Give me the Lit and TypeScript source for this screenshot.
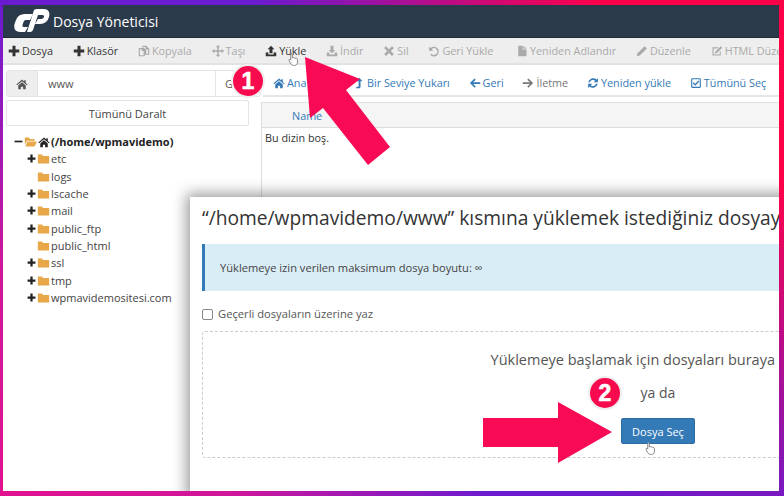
import { LitElement, html, css, svg } from "lit";
import { customElement } from "lit/decorators.js";

const paths: Record<string, any> = {
  plus: svg`<path d="M6 1h4v5h5v4h-5v5H6v-5H1V6h5z"/>`,
  copy: svg`<path fill-rule="evenodd" d="M6 1h5l4 4v8H9v2H1V4h5zM7 2.500V4h1l3 3v4.500h2.500V6H10V2.500zM2.500 5.500v8h5V8H5V5.500z"/>`,
  move: svg`<path d="M8 0l3 3H9v4h4V5l3 3-3 3V9H9v4h2l-3 3-3-3h2V9H3v2L0 8l3-3v2h4V3H5z"/>`,
  upload: svg`<path d="M8 1l4.500 4.500H10V11H6V5.500H3.500zM1 10h3.500v2.500h7V10H15v5H1z"/>`,
  download: svg`<path d="M6 1h4v5.500h2.500L8 11 3.500 6.500H6zM1 10h3.500v2.500h7V10H15v5H1z"/>`,
  times: svg`<path d="M4 1.500l4 4 4-4 2.500 2.500-4 4 4 4-2.500 2.500-4-4-4 4L1.500 12l4-4-4-4z"/>`,
  undo: svg`<path d="M1.500 2l2 2A6.500 6.500 0 1 1 3 13l1.500-1.500A4.400 4.400 0 1 0 5 5.500L7 7.500H1.500z"/>`,
  file: svg`<path d="M3 1h6v5h5v9H3zM10 1l4 4h-4z"/>`,
  pencil: svg`<path d="M11.500 1.500l3 3-9.500 9.500-4 1 1-4z"/>`,
  edit: svg`<path fill-rule="evenodd" d="M2 3h8L8.500 4.500h-5v8h8v-3L13 8v6H2z"/><path d="M13 1.500l2 2-7 7-3 1 1-3z"/>`,
  home: svg`<path d="M8 2l3 2.700V3h2v3.500l2.500 2.300-1 1L8 4.200 1.500 9.800l-1-1zM3 10l5-4.300L13 10v5H9.500v-3.500h-3V15H3z"/>`,
  up: svg`<path d="M8.500 1l4 4.500H10V13c0 1.500-1 2-2 2H3.500l1.500-2h2.500V5.500H5z"/>`,
  left: svg`<path d="M7.500 2l1.500 1.500L5.500 7H15v2.200H5.500L9 12.700 7.500 14.200 1.200 8z"/>`,
  right: svg`<path d="M8.500 2L7 3.500 10.500 7H1v2.200h9.500L7 12.700l1.500 1.500L14.800 8z"/>`,
  refresh: svg`<path d="M14.500 1.500V7h-5.500l2-2A4.300 4.300 0 0 0 4 7H1.700A6.600 6.600 0 0 1 12.600 3.400zM1.500 14.500V9h5.500l-2 2A4.300 4.300 0 0 0 12 9h2.300A6.600 6.600 0 0 1 3.400 12.600z"/>`,
  check: svg`<path fill-rule="evenodd" d="M3 1.500h10A1.500 1.500 0 0 1 14.500 3v10a1.500 1.500 0 0 1-1.500 1.500H3A1.500 1.500 0 0 1 1.500 13V3A1.500 1.500 0 0 1 3 1.500zM3 3v10h10V3z"/><path d="M11.300 4.800l1.200 1.200-5.500 5.500L3.700 8.200l1.200-1.200L7 9.100z"/>`,
  folder: svg`<path d="M1 3h5l1.500 2H15v9H1z"/>`,
  open: svg`<path d="M1 3h5l1.500 2H13v2H4L1 12z"/><path d="M4.500 8H16l-3 6H1.500z"/>`,
  minus: svg`<path d="M1 6.500h14v3H1z"/>`,
};

const icon = (name: string) => html`<svg class="ic" viewBox="0 0 16 16" fill="currentColor">${paths[name]}</svg>`;

const hand = html`<svg class="hand-svg" viewBox="0 0 14 18"><path d="M4 1.500c1 0 1.500.700 1.500 1.500v4c.8-.6 1.800-.4 2.200.2.800-.5 1.700-.2 2 .5.900-.4 2.300.100 2.300 1.300v3.500c0 2.500-1.500 4-3.800 4H7c-1.600 0-2.500-.8-3.300-2L1.300 10.500c-.6-1 .6-2.200 1.700-1.300l.5.600V3c0-.8 0-1.500.500-1.500z" fill="#fff" stroke="#666" stroke-width="1"/></svg>`;

const tools: [string, string, boolean][] = [
  ["plus", "Dosya", true], ["plus", "Klasör", true], ["copy", "Kopyala", false], ["move", "Taşı", false],
  ["upload", "Yükle", true], ["download", "İndir", false], ["times", "Sil", false], ["undo", "Geri Yükle", false],
];
const tools2: [string, string][] = [["file", "Yeniden Adlandır"], ["pencil", "Düzenle"], ["edit", "HTML Düzenleyici"]];
const navs: [string, string, boolean][] = [
  ["home", "Ana Dizin", true], ["up", "Bir Seviye Yukarı", true], ["left", "Geri", true],
  ["right", "İletme", false], ["refresh", "Yeniden yükle", true], ["check", "Tümünü Seç", true],
];
const tree: [string, boolean][] = [
  ["etc", true], ["logs", false], ["lscache", true], ["mail", true], ["public_ftp", true],
  ["public_html", false], ["ssl", true], ["tmp", true], ["wpmavidemositesi.com", true],
];

@customElement("app-root")
export class AppRoot extends LitElement {
  static styles = css`
    :host { display: block; width: 784px; height: 496px; font-family: "Open Sans", sans-serif; font-size: 10.8px; color: #333; }
    * { box-sizing: border-box; }
    .frame { width: 784px; height: 496px; padding: 5px 5px 5px 3px;
      background:
        radial-gradient(circle at top right, #ff0048 0, #ff0048 180px, rgba(255,0,72,0) 530px),
        radial-gradient(circle at bottom left, #e0128f 0, #d0169a 230px, rgba(208,22,154,0) 490px),
        #6a1bd0; }
    .page { position: relative; width: 776px; height: 486px; background: #fff; overflow: hidden; display: flex; flex-direction: column; }
    .ic { width: 12px; height: 12px; flex: none; display: block; }
    .top { height: 33px; flex: none; background: #2b3a4b; border-bottom: 1px solid #1f2a36; display: flex; align-items: center; padding-left: 11px; gap: 3px; }
    .logo { width: 36px; height: 24px; display: block; margin-top: -1px; }
    .title { color: #fff; font-size: 14px; }
    .tools { height: 27px; flex: none; background: #eee; border-bottom: 2px solid #e2e2e2; display: flex; align-items: center; padding-left: 5px; gap: 19.800px; white-space: nowrap; }
    .tool { display: flex; align-items: center; gap: 2px; color: #aaa; }
    .tool.on { color: #333; }
    .sep { width: 1px; height: 27px; background: #e0e0e0; margin: 0 -7px 0 -10px; }
    .navrow { margin-top: 5px; height: 27px; flex: none; display: flex; }
    .pathbox { width: 255px; margin-left: 3px; flex: none; display: flex; border: 1px solid #e4e4e4; border-radius: 3px; font-size: 11px; }
    .homebtn { width: 31px; background: #eee; display: flex; align-items: center; justify-content: center; color: #555; border-right: 1px solid #e4e4e4; }
    .path { width: 178px; padding-left: 10px; display: flex; align-items: center; color: #555; border-right: 1px solid #e4e4e4; }
    .go { padding-left: 9px; display: flex; align-items: center; color: #555; }
    .nav { flex: 1; margin-left: 2px; padding-left: 10px; display: flex; align-items: center; gap: 18.800px; white-space: nowrap; border-bottom: 2px solid #e6e6e6; }
    .navitem { display: flex; align-items: center; gap: 2px; color: #337ab7; }
    .navitem.off { color: #777; }
    .main { flex: 1; display: grid; grid-template-columns: 243px 1fr; column-gap: 12px; padding-left: 3px; }
    .collapse { height: 26px; margin-top: 3px; border: 1px solid #e4e4e4; border-radius: 2px; display: flex; align-items: center; justify-content: center; color: #444; font-size: 11px; }
    .tree { margin-top: 7px; display: flex; flex-direction: column; font-size: 11px; }
    .row { height: 17.3px; display: flex; align-items: center; padding-left: 21px; gap: 1px; color: #444; }
    .root { padding-left: 8px; color: #222; font-weight: 700; }
    .row .exp { width: 9px; height: 9px; color: #222; }
    .row .noexp { width: 9px; flex: none; }
    .row .fold { width: 13px; height: 13px; color: #e8a84a; }
    .root .ic.home { width: 12px; height: 12px; color: #222; }
    .files { border-left: 1px solid #ddd; margin-top: 5px; }
    .head { height: 26px; background: #f5f5f5; border-top: 1px solid #e4e4e4; border-bottom: 1px solid #ddd; display: flex; align-items: center; padding-left: 30px; color: #337ab7; }
    .empty { padding: 2px 0 0 3px; color: #333; }
    .modal { position: absolute; left: 187px; top: 192px; width: 800px; height: 300px; background: #fff; box-shadow: 0 0 14px 3px rgba(0,0,0,.42); padding: 8px 12px; overflow: hidden; }
    .h { margin: 0; font-size: 19.200px; font-weight: 400; line-height: 26px; color: #333; white-space: nowrap; }
    .alert { margin-top: 13px; height: 47px; background: #d9edf7; border-left: 3px solid #337ab7; padding-left: 15px; display: flex; align-items: center; color: #444; font-size: 11.150px; width: 760px; }
    .chk { margin-top: 14px; display: flex; align-items: center; gap: 5px; color: #555; font-size: 11.200px; height: 16px; }
    .box { width: 11px; height: 11px; border: 1px solid #888; border-radius: 2px; background: #fff; margin-top: 3px; }
    .drop { margin-top: 10px; width: 912px; height: 127px; border: 1px dashed #ccc; display: flex; flex-direction: column; align-items: center; border-radius: 3px; color: #555; }
    .d1 { margin-top: 17px; font-size: 14.500px; line-height: 22px; white-space: nowrap; }
    .d2 { margin-top: 12px; font-size: 14px; line-height: 20px; }
    .btn { margin-top: 15px; width: 74px; height: 26px; background: #337ab7; border: 1px solid #2e6da4; border-radius: 2px; color: #fff; display: flex; align-items: center; justify-content: center; font-size: 11px; }
    .arrows { position: absolute; left: -3px; top: -5px; width: 784px; height: 496px; pointer-events: none; }
    .badge { position: absolute; width: 34px; height: 34px; border-radius: 50%; background: #f80a4e; border: 2px solid #eee; color: #fff; font-family: "Liberation Sans", sans-serif; font-weight: 700; font-size: 23px; -webkit-text-stroke: 0.6px #fff; display: flex; align-items: center; justify-content: center; }
    .b1 { left: 228px; top: 59px; }
    .b2 { left: 585px; top: 371px; }
    .hand { position: absolute; width: 11px; height: 15px; }
    .hand-svg { width: 100%; height: 100%; display: block; }
    .h1 { left: 285px; top: 47px; }
    .h2 { left: 642px; top: 436px; }
  `;

  render() {
    return html`<div class="frame"><div class="page">
      <div class="top">
        <svg class="logo" viewBox="0 0 36 24"><path fill="#fff" d="M19 5L16 11H12Q10 11 9.500 13L8.500 16Q8 18 10 18H14L11 23H6Q-1 23 .5 15L2 11Q4 5 11 5z"/><path fill="#fff" d="M20 1Q21 0 23 0H29Q37 0 35 8Q33 15 26 15H21L24 10H27Q29.500 10 30 8Q30.500 6 28 6H24L19 21Q18 23 16 23H13z"/></svg>
        <span class="title">Dosya Yöneticisi</span>
      </div>
      <div class="tools">
        ${tools.map(([i, t, on]) => html`<span class="tool ${on ? "on" : ""}">${icon(i)}${t}</span>`)}
        <span class="sep"></span>
        ${tools2.map(([i, t]) => html`<span class="tool">${icon(i)}${t}</span>`)}
      </div>
      <div class="navrow">
        <div class="pathbox">
          <span class="homebtn">${icon("home")}</span>
          <span class="path">www</span>
          <span class="go">Git</span>
        </div>
        <div class="nav">
          ${navs.map(([i, t, on]) => html`<span class="navitem ${on ? "" : "off"}">${icon(i)}${t}</span>`)}
        </div>
      </div>
      <div class="main">
        <div>
          <div class="collapse">Tümünü Daralt</div>
          <div class="tree">
            <div class="row root">
              <svg class="ic exp" viewBox="0 0 16 16" fill="currentColor">${paths.minus}</svg>
              <svg class="ic fold" viewBox="0 0 16 16" fill="currentColor">${paths.open}</svg>
              <svg class="ic home" viewBox="0 0 16 16" fill="currentColor">${paths.home}</svg>
              (/home/wpmavidemo)
            </div>
            ${tree.map(([n, e]) => html`<div class="row">
              ${e ? html`<svg class="ic exp" viewBox="0 0 16 16" fill="currentColor">${paths.plus}</svg>` : html`<span class="noexp"></span>`}
              <svg class="ic fold" viewBox="0 0 16 16" fill="currentColor">${paths.folder}</svg>
              ${n}
            </div>`)}
          </div>
        </div>
        <div class="files">
          <div class="head">Name</div>
          <div class="empty">Bu dizin boş.</div>
        </div>
      </div>
      <div class="modal">
        <h2 class="h">“/home/wpmavidemo/www” kısmına yüklemek istediğiniz dosyayı seçin</h2>
        <div class="alert">Yüklemeye izin verilen maksimum dosya boyutu: ∞</div>
        <div class="chk"><span class="box"></span>Geçerli dosyaların üzerine yaz</div>
        <div class="drop">
          <div class="d1">Yüklemeye başlamak için dosyaları buraya bırakın</div>
          <div class="d2">ya da</div>
          <div class="btn">Dosya Seç</div>
        </div>
      </div>
      <div class="hand h1">${hand}</div>
      <div class="hand h2">${hand}</div>
      <svg class="arrows" viewBox="0 0 784 496">
        <path fill="#f80a55" d="M305 57L360 79 346 90 390 147 368 165 323 108 310 118z"/>
        <path fill="#f80a55" d="M483 418H558V402L612 432 558 463V447H483z"/>
      </svg>
      <div class="badge b1">1</div>
      <div class="badge b2">2</div>
    </div></div>`;
  }
}
